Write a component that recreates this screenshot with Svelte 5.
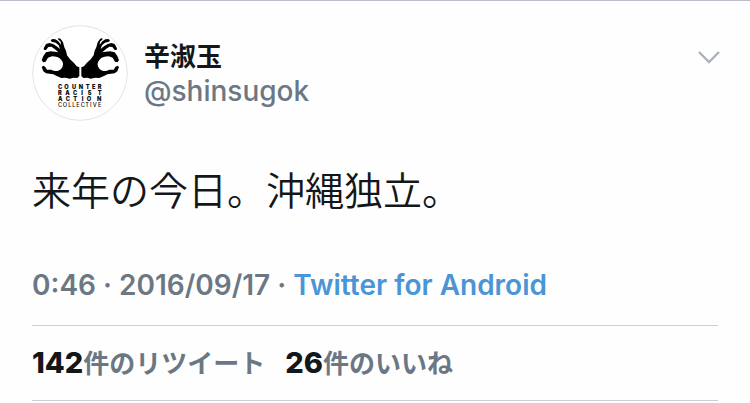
<script>
  const user = { name: '辛淑玉', handle: '@shinsugok' };
  const stats = [
    { count: 142, label: '件のリツイート' },
    { count: 26, label: '件のいいね' },
  ];
</script>

<article class="tweet">
  <header>
    <svg class="avatar" viewBox="24 27 288 288" role="img" aria-label="Counter Racist Action Collective">
      <defs>
        <g id="hand">
          <path d="M166 154 L166 180 L160 186 L148 185 L138 188 L124 185 L112 186 L98 180 L88 175 L66 172 L58 166 L53 153 L58 149 L64 153 L69 161 L82 161 C92 167 104 166 112 158 C119 149 119 140 112 132 C105 123 95 121 84 121 L72 125 L65 137 L58 139 L53 133 L58 120 L66 109 L80 106 L93 107 L103 109 L92 99 L82 92 L73 93 L66 102 L60 102 L59 97 L66 84 L76 81 L87 84 L98 91 L108 99 L104 88 L95 80 L83 77 L80 73 L85 69 L94 70 L103 76 L111 86 L110 77 L102 70 L104 66 L110 69 L117 79 L121 94 L126 104 L129 118 L138 130 L150 141 L158 151 Z" />
        </g>
      </defs>
      <circle cx="168" cy="171" r="142" fill="#fff" stroke="#e1e4e6" stroke-width="3" />
      <use href="#hand" />
      <use href="#hand" transform="translate(338 0) scale(-1 1)" />
      <g class="logo-text">
        <text y="220" x="102 121 144 164 185 204 221">COUNTER</text>
        <text y="237" x="102 124 147 172 191 221">RACIST</text>
        <text y="254" x="102 125 148 173 188 219">ACTION</text>
        <text class="thin" y="272" x="102 116 133 145 157 170 184 198 206 222">COLLECTIVE</text>
      </g>
    </svg>
    <div class="user">
      <strong>{user.name}</strong>
      <span>{user.handle}</span>
    </div>
    <button class="more" aria-label="その他">
      <svg viewBox="0 0 24 16" width="24" height="16">
        <path d="M3 3 L13 13 L23 3" fill="none" stroke="#aab3bb" stroke-width="2.4" />
      </svg>
    </button>
  </header>

  <p class="body">来年の今日。沖縄独立。</p>

  <div class="meta">
    0:46 · 2016/09/17 · <a href="#source">Twitter for Android</a>
  </div>

  <div class="stats">
    {#each stats as stat}
      <span><b>{stat.count}</b>{stat.label}</span>
    {/each}
  </div>
</article>

<style>
  :global(body) {
    margin: 0;
    background: #fefefe;
  }

  .tweet {
    padding: 24px 32px 0;
    border-top: 1px solid #b9bec8;
    font-family: Inter, 'Noto Sans CJK JP', sans-serif;
    font-size: 28px;
    font-weight: 500;
    color: #6b7884;
  }

  header {
    display: flex;
    align-items: flex-start;
  }

  .avatar {
    width: 96px;
    height: 96px;
    flex: none;
  }

  .logo-text {
    font-family: Inter, sans-serif;
    font-size: 17px;
    font-weight: 900;
    fill: #111;
  }

  .thin {
    font-weight: 500;
  }

  .user {
    flex: 1;
    display: flex;
    flex-direction: column;
    padding: 15px 0 0 16px;
    line-height: 34px;
  }

  .user strong {
    font-size: 26px;
    font-weight: 700;
    color: #14171a;
  }

  .more {
    display: flex;
    margin-top: 24px;
    margin-right: -2px;
    padding: 0;
    border: 0;
    background: none;
    cursor: pointer;
  }

  .body {
    margin: 41px 0 0;
    font-size: 39px;
    font-weight: 350;
    line-height: 58px;
    color: #14171a;
  }

  .meta {
    margin-top: 48px;
    padding-bottom: 23px;
    font-weight: 600;
    line-height: 34px;
    border-bottom: 1px solid #ccd0d2;
  }

  .meta a {
    color: #4a95d6;
    text-decoration: none;
  }

  .stats {
    display: flex;
    gap: 20px;
    padding: 20px 0 19px;
    font-size: 26px;
    font-weight: 600;
    line-height: 34px;
    border-bottom: 1px solid #ccd0d2;
  }

  .stats b {
    font-size: 29px;
    font-weight: 800;
    color: #14171a;
  }
</style>
